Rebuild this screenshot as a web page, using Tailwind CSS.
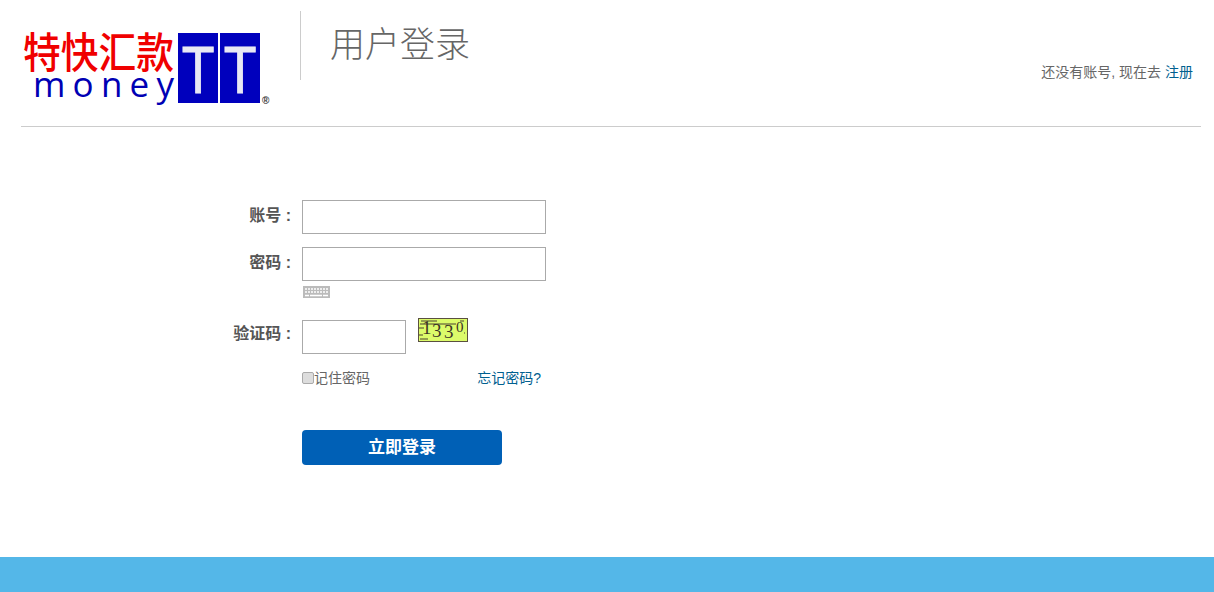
<!DOCTYPE html>
<html lang="zh-CN">
<head>
    <meta charset="UTF-8">
    <title>用户登录</title>
    <script src="https://cdn.jsdelivr.net/npm/@tailwindcss/browser@4"></script>
</head>
<body class="bg-white h-[592px] overflow-hidden flex flex-col text-[14px] text-[#666] font-['Liberation_Sans','Noto_Sans_CJK_SC',sans-serif]">
    <!-- header -->
    <header class="ml-[21px] w-[1180px] h-[127px] shrink-0 border-b border-[#ccc] flex items-start">
        <svg class="ml-[2px] mt-[33px] shrink-0 overflow-visible" width="248" height="73" viewBox="0 0 248 73">
            <text transform="translate(0 35) scale(1 1.1)" font-size="38" font-weight="500" fill="#f00000" textLength="151" lengthAdjust="spacingAndGlyphs" font-family="'Noto Sans CJK SC',sans-serif">特快汇款</text>
            <text x="10" y="64" font-size="35" font-weight="500" fill="#0000b4" textLength="141" font-family="'Open Sans','Liberation Sans',sans-serif">money</text>
            <rect x="155" y="0" width="40" height="70" fill="#0000bd"/>
            <rect x="197" y="0" width="40" height="70" fill="#0000bd"/>
            <text transform="translate(175 60) scale(.8 1)" text-anchor="middle" font-size="67" fill="#e8e8f4" stroke="#e8e8f4" stroke-width="1" font-family="'Liberation Sans',sans-serif">T</text>
            <text transform="translate(217 60) scale(.8 1)" text-anchor="middle" font-size="67" fill="#e8e8f4" stroke="#e8e8f4" stroke-width="1" font-family="'Liberation Sans',sans-serif">T</text>
            <text x="239" y="71" font-size="10" font-weight="700" fill="#333" font-family="'Liberation Sans',sans-serif">®</text>
        </svg>
        <div class="ml-[29px] mt-[11px] w-px h-[69px] bg-[#ccc] shrink-0"></div>
        <h1 class="ml-[29px] mt-[20px] text-[35px] leading-[50px] font-light text-[#666]">用户登录</h1>
        <div class="ml-auto mr-[8px] mt-[62px] leading-[20px]">还没有账号, 现在去 <a href="#" class="text-[#00608f]">注册</a></div>
    </header>

    <!-- form -->
    <main class="flex-1 pt-[73px]">
        <form class="flex flex-col">
            <div class="flex items-center h-[34px]">
                <label class="w-[291px] pb-[3px] text-right font-bold text-[16px] text-[#555]">账号 :</label>
                <input type="text" class="ml-[11px] w-[244px] h-[34px] border border-[#aaa] bg-white">
            </div>
            <div class="flex items-center h-[34px] mt-[13px]">
                <label class="w-[291px] pb-[3px] text-right font-bold text-[16px] text-[#555]">密码 :</label>
                <input type="password" class="ml-[11px] w-[244px] h-[34px] border border-[#aaa] bg-white">
            </div>
            <svg class="ml-[303px] mt-[5px]" width="27" height="12" viewBox="0 0 27 12">
                <rect width="27" height="12" fill="#bbb"/>
                <path d="M2 3h23M2 6h23" stroke="#fff" stroke-width="1.5" stroke-dasharray="2 1"/>
                <path d="M2 9.5h4M7 9.5h12M20 9.5h5" stroke="#fff" stroke-width="1.5"/>
            </svg>
            <div class="flex items-start mt-[22px] h-[36px]">
                <label class="w-[291px] text-right font-bold text-[16px] text-[#555] leading-[27px]">验证码 :</label>
                <input type="text" class="ml-[11px] w-[104px] h-[34px] border border-[#aaa] bg-white">
                <svg class="ml-[12px] -mt-[2px]" width="50" height="24" viewBox="0 0 50 24">
                    <rect x="0.5" y="0.5" width="49" height="23" fill="#dcfb6a" stroke="#5a5040"/>
                    <path d="M2 6h36M3 3h16M1 10h5M1 17h4M2 21h8M42 3h4M44 10h1M46 15h1" stroke="#4a4030" stroke-width="1"/>
                    <g font-size="19" fill="#3d3527" font-family="'Liberation Serif',serif">
                        <text x="4" y="16">1</text>
                        <text x="14" y="19">3</text>
                        <text x="26" y="20">3</text>
                        <text x="38" y="14" font-size="15">0</text>
                    </g>
                </svg>
            </div>
            <div class="flex items-center ml-[302px] w-[239px] mt-[13px] h-[20px]">
                <span class="w-[12px] h-[12px] rounded-[2px] border border-[#aaa] bg-[#ddd] -mt-[2px]"></span>
                <span class="-mt-px">记住密码</span>
                <a href="#" class="ml-auto -mt-px text-[#00608f]">忘记密码?</a>
            </div>
            <button type="button" class="ml-[302px] mt-[41px] w-[200px] h-[35px] rounded-[4px] bg-[#0060b6] text-white font-bold text-[17px]">立即登录</button>
        </form>
    </main>

    <footer class="h-[35px] shrink-0 bg-[#54b7e8]"></footer>
</body>
</html>
